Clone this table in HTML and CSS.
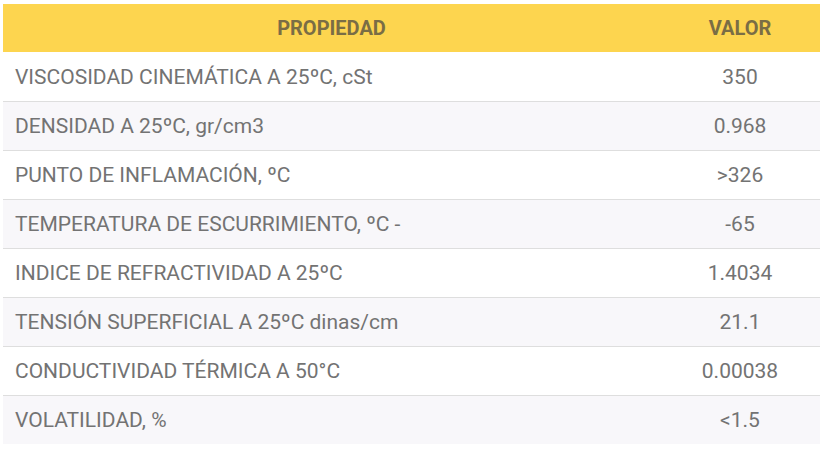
FILE: index.html
```html
<!DOCTYPE html>
<html lang="es">
<head>
<meta charset="utf-8">
<link rel="stylesheet" href="styles.css">
</head>
<body>
<table class="props">
  <thead>
    <tr><th class="c-prop">PROPIEDAD</th><th class="c-val">VALOR</th></tr>
  </thead>
  <tbody>
    <tr><td class="c-prop">VISCOSIDAD CINEMÁTICA A 25ºC, cSt</td><td class="c-val">350</td></tr>
    <tr><td class="c-prop">DENSIDAD A 25ºC, gr/cm3</td><td class="c-val">0.968</td></tr>
    <tr><td class="c-prop">PUNTO DE INFLAMACIÓN, ºC</td><td class="c-val">&gt;326</td></tr>
    <tr><td class="c-prop">TEMPERATURA DE ESCURRIMIENTO, ºC -</td><td class="c-val">-65</td></tr>
    <tr><td class="c-prop">INDICE DE REFRACTIVIDAD A 25ºC</td><td class="c-val">1.4034</td></tr>
    <tr><td class="c-prop">TENSIÓN SUPERFICIAL A 25ºC dinas/cm</td><td class="c-val">21.1</td></tr>
    <tr><td class="c-prop">CONDUCTIVIDAD TÉRMICA A 50°C</td><td class="c-val">0.00038</td></tr>
    <tr><td class="c-prop">VOLATILIDAD, %</td><td class="c-val">&lt;1.5</td></tr>
  </tbody>
</table>
</body>
</html>
```
FILE: styles.css
```css
html, body { margin: 0; padding: 0; background: #ffffff; }
body { padding: 4px 5px 0 3px; font-family: Roboto, "Liberation Sans", sans-serif; }
.props { width: 817px; border-collapse: collapse; table-layout: fixed; font-size: 21px; color: #737373; }
.props thead th { background: #fdd54f; color: #7a6d45; font-weight: 700; height: 48px; padding: 0; text-align: center; font-size: 20px; }
.props td { height: 48px; padding: 0 12px; border-top: 1px solid #dedede; }
.props tbody tr:first-child td { border-top: none; height: 49px; }
.props tbody tr:nth-child(even) td { background: #f8f7fa; }
.props .c-prop { text-align: left; }
.props th.c-prop { text-align: center; width: 657px; }
.props th.c-val { width: 160px; }
.props .c-val { text-align: center; padding: 0; }
```
